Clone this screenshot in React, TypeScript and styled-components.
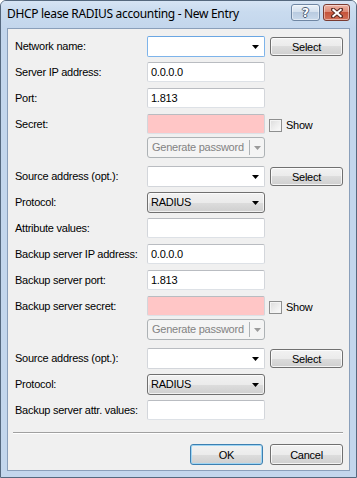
import React from "react";
import styled, { createGlobalStyle } from "styled-components";

const Global = createGlobalStyle`
  html, body { margin: 0; padding: 0; background: #ffffff; }
  body { font-family: "Liberation Sans", Arial, sans-serif; }
  * { box-sizing: border-box; }
`;

const Window = styled.div`
  width: 357px;
  height: 478px;
  border: 1px solid #55687e;
  border-radius: 6px 6px 0 0;
  background: #c3d6ec;
  display: flex;
  flex-direction: column;
  overflow: hidden;
`;

const TitleBar = styled.div`
  height: 27px;
  flex: none;
  display: flex;
  align-items: flex-start;
  padding: 0 6px 0 6px;
  background: linear-gradient(#d6e4f4 0%, #c9dbef 40%, #c3d6ec 100%);
`;

const TitleText = styled.div`
  flex: 1;
  margin-top: 5px;
  font-family: "Noto Sans", "Open Sans", sans-serif;
  font-size: 12px;
  line-height: 16px;
  color: #000;
  white-space: nowrap;
  letter-spacing: -0.32px;
`;

const CaptionButtons = styled.div`
  display: flex;
  gap: 3px;
  margin-top: 3px;
`;

const CaptionButton = styled.div<{ $kind: "help" | "close" }>`
  height: 17px;
  width: ${(p) => (p.$kind === "help" ? 29 : 27)}px;
  border-radius: 3px;
  border: 1px solid ${(p) => (p.$kind === "help" ? "#6f86a3" : "#7a3b31")};
  background: ${(p) =>
    p.$kind === "help"
      ? "linear-gradient(#eaf1f9 0%, #d4e0ee 45%, #b9cbe0 50%, #c9d9eb 100%)"
      : "linear-gradient(#eeb3a4 0%, #dc8a76 45%, #c5533a 50%, #d27058 100%)"};
  box-shadow: inset 0 0 0 1px rgba(255, 255, 255, 0.45);
  display: flex;
  align-items: center;
  justify-content: center;
`;

const HelpGlyph = styled.span`
  font-family: "DejaVu Sans", sans-serif;
  font-weight: bold;
  font-size: 12px;
  line-height: 12px;
  color: #ffffff;
  text-shadow: 1px 0 0 #4a5d74, -1px 0 0 #4a5d74, 0 1px 0 #4a5d74, 0 -1px 0 #4a5d74;
`;

const Frame = styled.div`
  flex: 1;
  display: flex;
  padding: 0 6px 6px 6px;
`;

const Client = styled.div`
  flex: 1;
  border: 1px solid #8a9fba;
  background: #f0f0f0;
  padding: 7px 6px 0 7px;
  display: flex;
  flex-direction: column;
  font-size: 11px;
  letter-spacing: -0.25px;
  color: #000;
`;

const Form = styled.div`
  display: flex;
  flex-direction: column;
`;

const Row = styled.div<{ $h: number }>`
  display: grid;
  grid-template-columns: 127px 118px 73px;
  column-gap: 5px;
  height: ${(p) => p.$h}px;
  align-items: start;
`;

const Label = styled.div<{ $ch?: number }>`
  height: ${(p) => p.$ch ?? 20}px;
  line-height: ${(p) => p.$ch ?? 20}px;
  white-space: nowrap;
`;

const TextBox = styled.div<{ $pink?: boolean }>`
  height: 20px;
  border: 1px solid;
  border-color: #b9bcc1 #d3d6db #dde1e6 #d3d6db;
  border-radius: 2px;
  background: ${(p) => (p.$pink ? "#ffc6c6" : "#ffffff")};
  padding-left: 3px;
  line-height: 18px;
  white-space: nowrap;
`;

const EditCombo = styled.div<{ $focused?: boolean }>`
  height: 21px;
  border: 1px solid ${(p) => (p.$focused ? "#7eb4ea" : "#d3d6db")};
  border-top-color: ${(p) => (p.$focused ? "#6aa6e3" : "#b9bcc1")};
  border-radius: 2px;
  background: #ffffff;
  display: flex;
  align-items: center;
  justify-content: flex-end;
  padding-right: 5px;
`;

const DropList = styled.div`
  height: 21px;
  border: 1px solid #707070;
  border-radius: 3px;
  background: linear-gradient(#f2f2f2 0%, #ebebeb 50%, #dddddd 50%, #cfcfcf 100%);
  box-shadow: inset 0 0 0 1px rgba(255, 255, 255, 0.7);
  display: flex;
  align-items: center;
  justify-content: space-between;
  padding: 0 5px 0 3px;
  line-height: 19px;
`;

const PushButton = styled.div<{ $default?: boolean; $w?: number; $h?: number }>`
  width: ${(p) => (p.$w ? `${p.$w}px` : "auto")};
  height: ${(p) => p.$h ?? 19}px;
  border: 1px solid ${(p) => (p.$default ? "#3c7fb1" : "#707070")};
  border-radius: 3px;
  background: linear-gradient(#f2f2f2 0%, #ebebeb 50%, #dddddd 50%, #cfcfcf 100%);
  box-shadow: inset 0 0 0 1px ${(p) => (p.$default ? "#9fd5f3" : "rgba(255,255,255,0.75)")};
  display: flex;
  align-items: center;
  justify-content: center;
  white-space: nowrap;
`;

const SelectButton = styled(PushButton)`
  margin-top: 1px;
`;

const SplitButton = styled.div`
  height: 21px;
  border: 1px solid #adb2b5;
  border-radius: 3px;
  background: #f4f4f4;
  color: #838383;
  display: flex;
  align-items: stretch;
`;

const SplitText = styled.div`
  flex: 1;
  padding-left: 4px;
  line-height: 19px;
  white-space: nowrap;
`;

const SplitArrow = styled.div`
  width: 15px;
  border-left: 1px solid #adb2b5;
  margin: 2px 0;
  display: flex;
  align-items: center;
  justify-content: center;
`;

const CheckCell = styled.div`
  display: flex;
  align-items: center;
  gap: 4px;
  margin-left: -1px;
  margin-top: 5px;
  height: 13px;
`;

const CheckBox = styled.div`
  width: 13px;
  height: 13px;
  border: 1px solid #8e8f8f;
  background: linear-gradient(135deg, #dcdcdc 0%, #f0f0f0 60%, #fbfbfb 100%);
  box-shadow: inset 0 0 0 1px #f4f4f4;
`;

const CheckLabel = styled.span`
  line-height: 13px;
`;

const Separator = styled.div`
  margin: 12px 0 0 -2px;
  width: 330px;
  border-top: 1px solid #a0a0a0;
  border-bottom: 1px solid #ffffff;
`;

const ButtonBar = styled.div`
  display: flex;
  justify-content: flex-end;
  gap: 7px;
  margin-top: 10px;
`;

const Arrow = ({ color = "#000" }: { color?: string }) => (
  <svg width="7" height="4" viewBox="0 0 7 4">
    <polygon points="0,0 7,0 3.5,4" fill={color} />
  </svg>
);

const CloseGlyph = () => (
  <svg width="12" height="10" viewBox="0 0 12 10">
    <path d="M2 1.5 L10 8.5 M10 1.5 L2 8.5" stroke="#5b2a22" strokeWidth="4" strokeLinecap="square" />
    <path d="M2.3 1.8 L9.7 8.2 M9.7 1.8 L2.3 8.2" stroke="#ffffff" strokeWidth="2" strokeLinecap="square" />
  </svg>
);

const GeneratePassword = () => (
  <SplitButton>
    <SplitText>Generate password</SplitText>
    <SplitArrow>
      <Arrow color="#9a9a9a" />
    </SplitArrow>
  </SplitButton>
);

const Show = () => (
  <CheckCell>
    <CheckBox />
    <CheckLabel>Show</CheckLabel>
  </CheckCell>
);

const Empty = () => <div />;

export default function App() {
  return (
    <>
      <Global />
      <Window>
        <TitleBar>
          <TitleText>DHCP lease RADIUS accounting - New Entry</TitleText>
          <CaptionButtons>
            <CaptionButton $kind="help">
              <HelpGlyph>?</HelpGlyph>
            </CaptionButton>
            <CaptionButton $kind="close">
              <CloseGlyph />
            </CaptionButton>
          </CaptionButtons>
        </TitleBar>
        <Frame>
          <Client>
            <Form>
              <Row $h={26}>
                <Label $ch={21}>Network name:</Label>
                <EditCombo $focused>
                  <Arrow />
                </EditCombo>
                <SelectButton>Select</SelectButton>
              </Row>
              <Row $h={26}>
                <Label>Server IP address:</Label>
                <TextBox>0.0.0.0</TextBox>
              </Row>
              <Row $h={26}>
                <Label>Port:</Label>
                <TextBox>1.813</TextBox>
              </Row>
              <Row $h={23}>
                <Label>Secret:</Label>
                <TextBox $pink />
                <Show />
              </Row>
              <Row $h={29}>
                <Empty />
                <GeneratePassword />
              </Row>
              <Row $h={26}>
                <Label $ch={21}>Source address (opt.):</Label>
                <EditCombo>
                  <Arrow />
                </EditCombo>
                <SelectButton>Select</SelectButton>
              </Row>
              <Row $h={26}>
                <Label $ch={21}>Protocol:</Label>
                <DropList>
                  <span>RADIUS</span>
                  <Arrow />
                </DropList>
              </Row>
              <Row $h={26}>
                <Label>Attribute values:</Label>
                <TextBox />
              </Row>
              <Row $h={26}>
                <Label>Backup server IP address:</Label>
                <TextBox>0.0.0.0</TextBox>
              </Row>
              <Row $h={26}>
                <Label>Backup server port:</Label>
                <TextBox>1.813</TextBox>
              </Row>
              <Row $h={23}>
                <Label>Backup server secret:</Label>
                <TextBox $pink />
                <Show />
              </Row>
              <Row $h={29}>
                <Empty />
                <GeneratePassword />
              </Row>
              <Row $h={26}>
                <Label $ch={21}>Source address (opt.):</Label>
                <EditCombo>
                  <Arrow />
                </EditCombo>
                <SelectButton>Select</SelectButton>
              </Row>
              <Row $h={26}>
                <Label $ch={21}>Protocol:</Label>
                <DropList>
                  <span>RADIUS</span>
                  <Arrow />
                </DropList>
              </Row>
              <Row $h={20}>
                <Label>Backup server attr. values:</Label>
                <TextBox />
              </Row>
            </Form>
            <Separator />
            <ButtonBar>
              <PushButton $default $w={73} $h={21}>OK</PushButton>
              <PushButton $w={73} $h={21}>Cancel</PushButton>
            </ButtonBar>
          </Client>
        </Frame>
      </Window>
    </>
  );
}
